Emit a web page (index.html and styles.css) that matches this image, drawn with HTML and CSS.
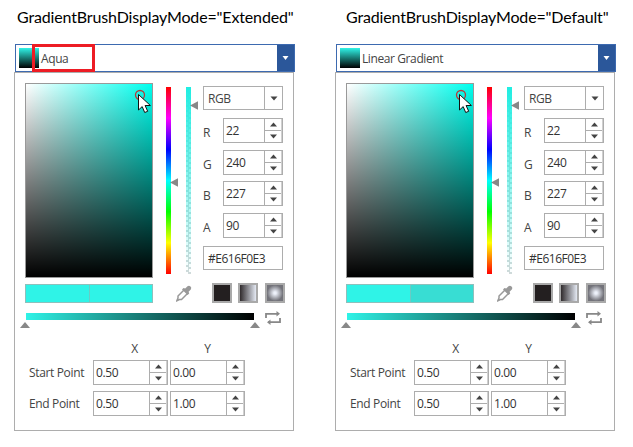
FILE: index.html
```
<!DOCTYPE html>
<html lang="en">
<head>
<meta charset="utf-8">
<title>Gradient brush display modes</title>
<link rel="stylesheet" href="styles.css">
</head>
<body>
<main class="page" id="page"></main>
<template id="picker">
  <section class="picker">
    <h1 class="title"></h1>
    <div class="combo">
      <span class="preview"></span><span class="name"></span>
      <span class="drop"><svg width="8" height="4"><path d="M0.5 0h6L3.5 4z" fill="#fff"/></svg></span>
    </div>
    <div class="panel">
      <div class="main">
        <div class="area">
          <svg class="pointer" width="20" height="32" viewBox="0 0 20 32"><circle cx="6" cy="11" r="4.5" fill="none" stroke="#b83a3a" stroke-width="1.3"/><path d="M4.5 10.5V26l3.7-3.4 2.5 5.9 3-1.2-2.6-5.8h5.3z" fill="#fff" stroke="#111" stroke-width="1"/></svg>
        </div>
        <div class="bar hue"><svg class="thumb t-hue" width="8" height="9"><path d="M0 4.5L8 0.3v8.4z"/></svg></div>
        <div class="bar alpha"><svg class="thumb t-alpha" width="8" height="9"><path d="M0 4.5L8 0.3v8.4z"/></svg></div>
        <div class="channels">
          <div class="mode"><span>RGB</span><i><svg width="8" height="5"><path d="M0.5 0.5h7L4 4.5z"/></svg></i></div>
          <div class="channel"><label>R</label><div class="spin">22</div></div>
          <div class="channel"><label>G</label><div class="spin">240</div></div>
          <div class="channel"><label>B</label><div class="spin">227</div></div>
          <div class="channel"><label>A</label><div class="spin">90</div></div>
          <div class="hex">#E616F0E3</div>
        </div>
      </div>
      <div class="tools">
        <div class="compare"><span></span><span class="previous"></span></div>
        <svg class="dropper" width="16" height="17" viewBox="0 0 16 17"><path d="M8.5 4.5L2 11v2L.8 15.7l2.7-1.2h2L12 8" fill="none" stroke="#999" stroke-width="1.5"/><path d="M6 4.600L7.500 3l1.700.5L11.500 1.300q1.600-1 3 .2t.3 3L12.600 6.800l.6 1.800L11.600 10z" fill="#999"/></svg>
        <span class="kind solid"></span><span class="kind linear"></span><span class="kind radial"></span>
      </div>
      <div class="stops">
        <div class="ramp"><svg class="stop first" width="10" height="6"><path d="M5 0l5 6H0z"/></svg><svg class="stop last" width="10" height="6"><path d="M5 0l5 6H0z"/></svg></div>
        <svg class="reverse" width="17" height="15" viewBox="0 0 17 15"><path d="M1 7V2.800h12M15 7v4.200H3" fill="none" stroke="#888" stroke-width="1.800"/><path d="M11.500 0l3.500 2.800-3.500 2.700zM5.500 8.500L2 11.200 5.500 14z" fill="#888"/></svg>
      </div>
      <div class="points">
        <span></span><b>X</b><b class="y">Y</b>
        <label>Start Point</label><div class="spin">0.50</div><div class="spin">0.00</div>
        <label>End Point</label><div class="spin">0.50</div><div class="spin">1.00</div>
      </div>
    </div>
  </section>
</template>
<script src="script.js"></script>
</body>
</html>
```
FILE: script.js
```
const arrows = '<i class="arrows"><svg width="16" height="11"><path d="M5 7.500h7L8.500 3.500z"/></svg><svg width="16" height="11"><path d="M5 3.500h7L8.500 7.500z"/></svg></i>';
[['Extended', 'Aqua'], ['Default', 'Linear Gradient']].forEach(([mode, name]) => {
  const node = document.getElementById('picker').content.cloneNode(true);
  node.querySelector('.picker').classList.add(mode.toLowerCase());
  node.querySelector('.title').textContent = 'GradientBrushDisplayMode="' + mode + '"';
  node.querySelector('.name').textContent = name;
  node.querySelectorAll('.spin').forEach(s => s.insertAdjacentHTML('beforeend', arrows));
  document.getElementById('page').append(node);
});
```
FILE: styles.css
```
*, *::after { box-sizing: border-box; }
body { margin: 0; background: #fff; color: #444; font: 12px/16px "Open Sans", "Noto Sans", sans-serif; letter-spacing: -0.4px; }
svg { display: block; flex: none; }
.page { display: flex; gap: 40px; padding-left: 14px; }
.picker { width: 281px; height: 447px; flex: none; }
.title { margin: 0; padding: 6px 0 0 3px; height: 44px; font: 16px/22px Lato, sans-serif; letter-spacing: -0.15px; color: #000; white-space: nowrap; }
.default .title { padding-left: 11px; }
.combo { position: relative; display: flex; align-items: center; height: 28px; margin-left: 1px; padding-left: 3px; border: 1px solid #3d6ab0; }
.preview { width: 20px; height: 20px; background: linear-gradient(#2ff3e7, #000); }
.name { margin: 2px 0 0 2px; flex: 1; }
.extended .combo::after { content: ""; position: absolute; left: 16px; top: -1px; width: 63px; height: 28px; border: 3px solid #ed1c24; }
.drop { width: 17px; align-self: stretch; background: #2b579a; display: grid; place-items: center; }
.panel { width: 280px; height: 359px; border: 1px solid #adadad; padding: 10px 0 0 10px; }
.main { display: flex; height: 195px; }
.area { position: relative; width: 128px; border: 1px solid #999; background: linear-gradient(transparent, #000), linear-gradient(90deg, #fff, #00ffee); }
.pointer { position: absolute; left: 108px; top: 0; }
.bar { position: relative; width: 5px; height: 187px; margin-top: 4px; }
.hue { margin-left: 13px; background: linear-gradient(#f00, #f0f, #00f, #0ff, #0f0, #ff0, #f00); }
.alpha { margin-left: 15px; background: linear-gradient(#20eee2, transparent), repeating-conic-gradient(#d0dada 0 25%, #fff 0 50%) 0 0 / 5px 5px; }
.thumb { position: absolute; left: 4px; fill: #888; }
.t-hue { top: 91px; }
.t-alpha { top: 14px; }
.channels { width: 80px; margin: 3px 0 0 12px; }
.mode { display: flex; height: 24px; margin-bottom: 8px; border: 1px solid #adadad; line-height: 23px; }
.mode span { flex: 1; padding-left: 4px; }
.mode i { width: 18px; border-left: 1px solid #adadad; display: grid; place-items: center; fill: #444; }
.channel { display: flex; justify-content: space-between; height: 25px; margin-bottom: 6.700px; }
.channel label { line-height: 29px; }
.spin { display: flex; justify-content: space-between; height: 25px; border: 1px solid #adadad; padding-left: 2px; line-height: 23px; color: #333; }
.channel .spin { width: 60px; }
.arrows { width: 18px; border-left: 1px solid #adadad; border-right: 1px solid #d0d0d0; fill: #444; }
.arrows svg + svg { border-top: 1px solid #adadad; height: 12px; }
.hex { height: 24px; margin-top: 8px; padding-left: 4px; border: 1px solid #adadad; line-height: 23px; color: #333; letter-spacing: -0.5px; }
.tools { display: flex; height: 20px; margin-top: 5px; }
.compare { display: flex; width: 128px; height: 19px; margin-top: 1px; border: 1px solid #8dc0bc; background: #2ff3e7; }
.compare span { flex: 1; }
.previous { border-left: 1px solid #6bcac4; }
.default .previous { background: #38ddd3; }
.dropper { margin: 2px 0 0 23px; }
.kind { width: 20px; height: 20px; border: 2px solid #a9a9a9; }
.solid { margin-left: 20px; background: #231f20; }
.linear { margin-left: 6px; background: linear-gradient(90deg, #302b2d, #e4e9f3); }
.radial { margin-left: 7px; background: radial-gradient(circle, #edf1fa 10%, #73737a 70%); }
.stops { display: flex; height: 17px; margin-top: 8px; }
.ramp { position: relative; width: 228px; height: 7px; margin: 2px 11px 0 1px; background: linear-gradient(90deg, #2ff3e7, #000); }
.stop { position: absolute; top: 9px; fill: #888; }
.first { left: -6px; }
.last { right: -6px; }
.points { display: grid; grid-template-columns: 66px 75px 75px; grid-template-rows: 18px 25px 25px; column-gap: 2px; row-gap: 6px; margin-top: 8px; }
.points b { font-weight: 400; line-height: 26px; text-align: center; padding-left: 8px; }
.points .y { padding-left: 0; }
.points label { padding-left: 4px; line-height: 25px; letter-spacing: -0.2px; white-space: nowrap; }
.points label { letter-spacing: -0.35px; }
```
